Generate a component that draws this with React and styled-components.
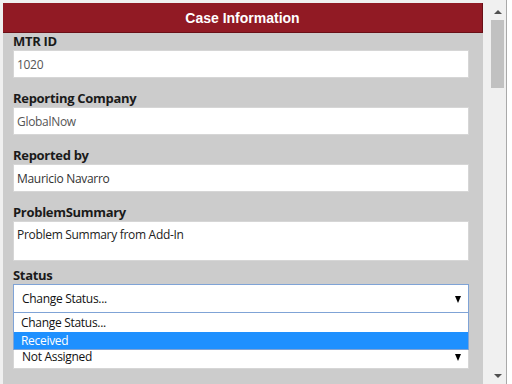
import React from "react";
import styled, { createGlobalStyle } from "styled-components";

const Global = createGlobalStyle`
  html, body { margin: 0; padding: 0; background: #ffffff; }
  body { width: 512px; height: 384px; overflow: hidden; }
  * { box-sizing: border-box; }
`;

const Frame = styled.div`
  width: 507px;
  height: 384px;
  background: #f0f0f0;
  border-right: 1px solid #a9a9a9;
  padding: 3px 0 0 3px;
  display: flex;
  overflow: hidden;
`;

const Panel = styled.div`
  width: 480px;
  background: #cccccc;
  display: flex;
  flex-direction: column;
`;

const Header = styled.div`
  height: 30px;
  background: #911a24;
  border-right: 1px solid #6a0f17;
  border-bottom: 1px solid #6a0f17;
  color: #ffffff;
  font: bold 14px "Liberation Sans", Arial, sans-serif;
  display: flex;
  align-items: center;
  justify-content: center;
`;

const Form = styled.div`
  padding: 0 14px 0 10px;
  display: flex;
  flex-direction: column;
`;

const Field = styled.div`
  display: flex;
  flex-direction: column;
  margin-top: ${(p) => p.$gap}px;
  position: relative;
  z-index: ${(p) => (p.$open ? 2 : 1)};
`;

const Label = styled.div`
  font: 700 13px "Open Sans", "Noto Sans", sans-serif;
  color: #1a1a1a;
  height: 17px;
  line-height: 17px;
  letter-spacing: -0.3px;
  visibility: ${(p) => (p.$covered ? "hidden" : "visible")};
`;

const Input = styled.div`
  height: ${(p) => p.$h || 28}px;
  background: #ffffff;
  border: 1px solid #d6d6d6;
  padding: ${(p) => (p.$area ? "4px 3px" : "0 3px")};
  display: flex;
  align-items: ${(p) => (p.$area ? "flex-start" : "center")};
  font: 12px "Open Sans", "Noto Sans", sans-serif;
  letter-spacing: -0.3px;
  color: ${(p) => p.$color || "#555"};
`;

const Select = styled.div`
  height: 29px;
  background: #ffffff;
  border: 1px solid ${(p) => (p.$focus ? "#7fa3d6" : "#d6d6d6")};
  padding: ${(p) => (p.$low ? "4px 7px 0 8px" : "0 7px 0 8px")};
  display: flex;
  align-items: center;
  justify-content: space-between;
  font: 12px/14px "Open Sans", "Noto Sans", sans-serif;
  letter-spacing: -0.3px;
  color: #111;
`;

const Arrow = styled.span`
  width: 0;
  height: 0;
  border-left: 3.5px solid transparent;
  border-right: 3.5px solid transparent;
  border-top: 7px solid #000;
  margin-top: 1px;
`;

const List = styled.div`
  position: absolute;
  left: 0;
  right: 0;
  top: 46px;
  background: #ffffff;
  border: 1px solid #7fa3d6;
  border-top: none;
  font: 12px "Open Sans", "Noto Sans", sans-serif;
  letter-spacing: -0.3px;
`;

const Option = styled.div`
  height: ${(p) => p.$h}px;
  line-height: ${(p) => p.$h}px;
  padding-left: 7px;
  background: ${(p) => (p.$active ? "#1e90ff" : "#ffffff")};
  color: ${(p) => (p.$active ? "#ffffff" : "#111")};
`;

const ScrollCol = styled.div`
  width: 23px;
  padding-left: 6px;
  display: flex;
`;

const Scrollbar = styled.div`
  width: 17px;
  height: 381px;
  display: flex;
  flex-direction: column;
  align-items: center;
`;

const ArrowBtn = styled.div`
  height: 17px;
  width: 17px;
  display: flex;
  align-items: center;
  justify-content: center;
`;

const ArrowUp = styled.span`
  border-left: 4px solid transparent;
  border-right: 4px solid transparent;
  border-bottom: 4px solid #505050;
`;

const ArrowDown = styled.span`
  border-left: 4px solid transparent;
  border-right: 4px solid transparent;
  border-top: 4px solid #505050;
`;

const Track = styled.div`
  flex: 1;
  width: 17px;
  padding: 0 2px;
`;

const Thumb = styled.div`
  height: 68px;
  background: #c1c1c1;
`;

export default function App() {
  return (
    <>
      <Global />
      <Frame>
        <Panel>
          <Header>Case Information</Header>
          <Form>
            <Field $gap={0}>
              <Label>MTR ID</Label>
              <Input>1020</Input>
            </Field>
            <Field $gap={12}>
              <Label>Reporting Company</Label>
              <Input>GlobalNow</Input>
            </Field>
            <Field $gap={12}>
              <Label>Reported by</Label>
              <Input $color="#333">Mauricio Navarro</Input>
            </Field>
            <Field $gap={12}>
              <Label>ProblemSummary</Label>
              <Input $area $h={40} $color="#222">Problem Summary from Add-In</Input>
            </Field>
            <Field $gap={6} $open>
              <Label>Status</Label>
              <Select $focus>
                <span>Change Status...</span>
                <Arrow />
              </Select>
              <List>
                <Option $h={19}>Change Status...</Option>
                <Option $h={17} $active>Received</Option>
              </List>
            </Field>
            <Field $gap={10}>
              <Label $covered>Assigned To</Label>
              <Select $low>
                <span>Not Assigned</span>
                <Arrow />
              </Select>
            </Field>
          </Form>
        </Panel>
        <ScrollCol>
          <Scrollbar>
            <ArrowBtn><ArrowUp /></ArrowBtn>
            <Track><Thumb /></Track>
            <ArrowBtn><ArrowDown /></ArrowBtn>
          </Scrollbar>
        </ScrollCol>
      </Frame>
    </>
  );
}
